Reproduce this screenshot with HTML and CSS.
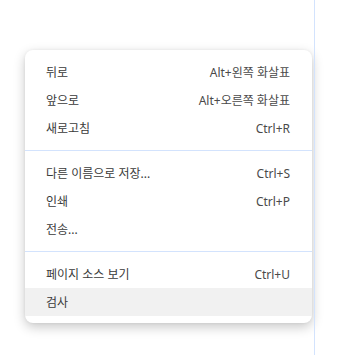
FILE: index.html
```html
<!DOCTYPE html>
<html lang="ko">
<head>
    <meta charset="UTF-8">
    <meta name="viewport" content="width=device-width, initial-scale=1.0">
    <title>컨텍스트 메뉴</title>
    <link rel="stylesheet" href="styles.css">
</head>
<body>
    <div class="page">
        <div class="menu">
            <div class="group">
                <div class="item"><span>뒤로</span><span class="key">Alt+왼쪽 화살표</span></div>
                <div class="item"><span>앞으로</span><span class="key">Alt+오른쪽 화살표</span></div>
                <div class="item"><span>새로고침</span><span class="key">Ctrl+R</span></div>
            </div>
            <div class="sep"></div>
            <div class="group">
                <div class="item"><span>다른 이름으로 저장...</span><span class="key">Ctrl+S</span></div>
                <div class="item"><span>인쇄</span><span class="key">Ctrl+P</span></div>
                <div class="item"><span>전송...</span></div>
            </div>
            <div class="sep"></div>
            <div class="group">
                <div class="item"><span>페이지 소스 보기</span><span class="key">Ctrl+U</span></div>
                <div class="item active"><span>검사</span></div>
            </div>
        </div>
        <div class="edge"></div>
    </div>
</body>
</html>
```

FILE: styles.css
```css
body {
    margin: 0;
    padding: 0;
    background-color: #ffffff;
    font-family: "Noto Sans", "Noto Sans CJK KR", sans-serif;
}

.page {
    display: flex;
    align-items: flex-start;
    height: 355px;
    padding-left: 25px;
}

.menu {
    width: 287px;
    margin-top: 50px;
    padding: 8px 0 7px;
    background-color: #ffffff;
    border-radius: 8px;
    box-shadow: 0 4px 12px rgba(0,0,0,0.22), 0 0 3px rgba(0,0,0,0.06);
}

.item {
    display: flex;
    justify-content: space-between;
    align-items: center;
    height: 28px;
    padding: 0 22px 0 21px;
    font-size: 12px;
    color: #3a3a3a;
}

.key {
    color: #4a4a4a;
}

.item.active {
    background-color: #f1f1f1;
}

.sep {
    height: 1px;
    margin: 8px 0;
    background-color: #d3e3fd;
}

.edge {
    width: 1px;
    height: 355px;
    margin-left: 2px;
    background-color: #d3e3fd;
}
```
